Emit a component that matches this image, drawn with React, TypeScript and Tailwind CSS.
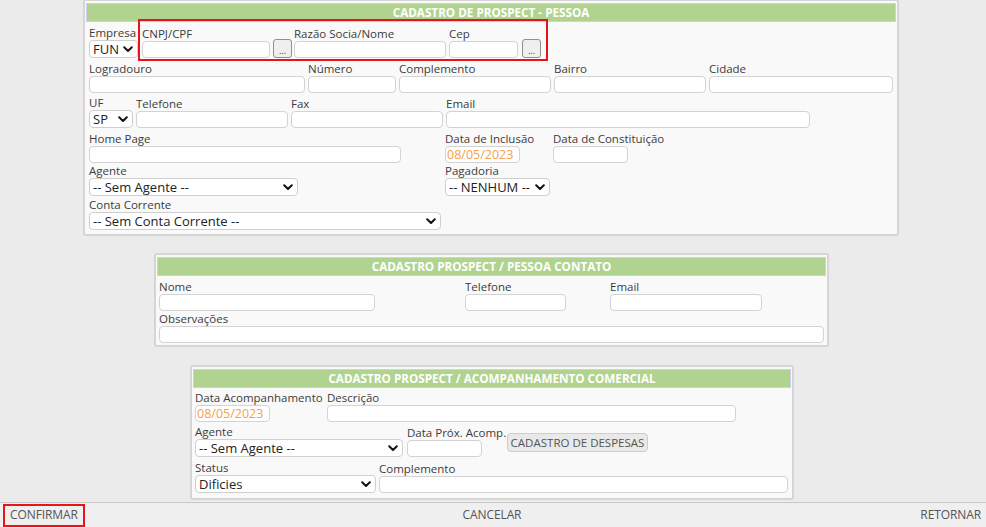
import React from "react";

const FONT = { fontFamily: '"Open Sans", "Noto Sans", sans-serif' };

function Label({ children }: { children: React.ReactNode }) {
  return (
    <div className="h-[14px] leading-[14px] text-[11.5px] text-[#3c3c3c] whitespace-nowrap">
      {children}
    </div>
  );
}

function Input({ className = "", value }: { className?: string; value?: string }) {
  return (
    <div
      className={
        "h-[17px] bg-white border border-[#d3d3d3] rounded-[4px] flex items-center px-[1px] text-[12.5px] leading-[15px] text-[#f5a04a] overflow-hidden " +
        className
      }
    >
      {value}
    </div>
  );
}

function Chevron() {
  return (
    <svg width="10" height="7" viewBox="0 0 10 7" className="shrink-0">
      <path d="M1.2 1.3 L5 5 L8.8 1.3" fill="none" stroke="#111" strokeWidth="2" strokeLinecap="round" strokeLinejoin="round" />
    </svg>
  );
}

function Select({ className = "", value }: { className?: string; value: string }) {
  return (
    <div
      className={
        "h-[18px] bg-white border border-[#cfcfcf] rounded-[4px] flex items-center justify-between pl-[3px] pr-[4px] text-[13px] leading-[16px] text-[#222] whitespace-nowrap overflow-hidden " +
        className
      }
    >
      <span>{value}</span>
      <Chevron />
    </div>
  );
}

function Field({ label, className = "", children }: { label: string; className?: string; children: React.ReactNode }) {
  return (
    <div className={"flex flex-col shrink-0 " + className}>
      <Label>{label}</Label>
      {children}
    </div>
  );
}

function DotsButton({ className = "" }: { className?: string }) {
  return (
    <div
      className={
        "w-[19px] h-[19px] shrink-0 bg-[#efefef] border border-[#8f8f8f] rounded-[3px] flex items-end justify-center pb-[2px] text-[9px] leading-[9px] text-[#333] " +
        className
      }
    >
      ...
    </div>
  );
}

function Header({ title }: { title: string }) {
  return (
    <div className="h-[19px] bg-[#b0d48f] border border-[#cdcdf7] flex items-center justify-center text-white font-bold text-[11.7px] whitespace-nowrap">
      {title}
    </div>
  );
}

export default function App() {
  return (
    <div className="w-[986px] h-[527px] overflow-hidden bg-[#ebebeb] flex flex-col" style={FONT}>
      {/* Panel 1 */}
      <div className="relative ml-[83px] w-[816px] mt-[-1px] bg-[#f9f9f9] border-2 border-[#d5d5d5] rounded-[3px] px-[1px] pt-[2px] pb-[4px]">
        <Header title="CADASTRO DE PROSPECT - PESSOA" />
        <div className="pl-[3px]">
          {/* Row 1 */}
          <div className="flex items-end mt-[4px]">
            <Field label="Empresa" className="w-[49px]">
              <Select value="FUN" className="w-[49px]" />
            </Field>
            <Field label="CNPJ/CPF" className="w-[128px] ml-[4px]">
              <Input className="w-[128px]" />
            </Field>
            <DotsButton className="ml-[3px]" />
            <Field label="Razão Socia/Nome" className="w-[152px] ml-[2px]">
              <Input className="w-[152px]" />
            </Field>
            <Field label="Cep" className="w-[69px] ml-[3px]">
              <Input className="w-[69px]" />
            </Field>
            <DotsButton className="ml-[4px]" />
          </div>
          {/* Row 2 */}
          <div className="flex items-end mt-[4px]">
            <Field label="Logradouro" className="w-[216px]">
              <Input className="w-[216px]" />
            </Field>
            <Field label="Número" className="w-[88px] ml-[3px]">
              <Input className="w-[88px]" />
            </Field>
            <Field label="Complemento" className="w-[152px] ml-[3px]">
              <Input className="w-[152px]" />
            </Field>
            <Field label="Bairro" className="w-[152px] ml-[3px]">
              <Input className="w-[152px]" />
            </Field>
            <Field label="Cidade" className="w-[184px] ml-[3px]">
              <Input className="w-[184px]" />
            </Field>
          </div>
          {/* Row 3 */}
          <div className="flex items-end mt-[3px]">
            <Field label="UF" className="w-[44px]">
              <Select value="SP" className="w-[44px]" />
            </Field>
            <Field label="Telefone" className="w-[152px] ml-[3px]">
              <Input className="w-[152px]" />
            </Field>
            <Field label="Fax" className="w-[152px] ml-[3px]">
              <Input className="w-[152px]" />
            </Field>
            <Field label="Email" className="w-[364px] ml-[3px]">
              <Input className="w-[364px]" />
            </Field>
          </div>
          {/* Row 4 */}
          <div className="flex items-end mt-[4px]">
            <Field label="Home Page" className="w-[312px]">
              <Input className="w-[312px]" />
            </Field>
            <Field label="Data de Inclusão" className="w-[75px] ml-[44px]">
              <Input className="w-[75px]" value="08/05/2023" />
            </Field>
            <Field label="Data de Constituição" className="w-[75px] ml-[33px]">
              <Input className="w-[75px]" />
            </Field>
          </div>
          {/* Row 5 */}
          <div className="flex items-end mt-[1px]">
            <Field label="Agente" className="w-[209px]">
              <Select value="-- Sem Agente --" className="w-[209px]" />
            </Field>
            <Field label="Pagadoria" className="w-[105px] ml-[147px]">
              <Select value="-- NENHUM --" className="w-[105px]" />
            </Field>
          </div>
          {/* Row 6 */}
          <div className="flex items-end mt-[2px]">
            <Field label="Conta Corrente" className="w-[352px]">
              <Select value="-- Sem Conta Corrente --" className="w-[352px]" />
            </Field>
          </div>
        </div>
        {/* highlight annotation */}
        <div className="absolute left-[53px] top-[18px] w-[410px] h-[42px] border-2 border-[#e8141c] pointer-events-none" />
      </div>

      {/* Panel 2 */}
      <div className="ml-[154px] w-[675px] mt-[17px] bg-[#f9f9f9] border-2 border-[#d5d5d5] rounded-[3px] px-[1px] pt-[2px] pb-[2px]">
        <Header title="CADASTRO PROSPECT / PESSOA CONTATO" />
        <div className="pl-[2px]">
          <div className="flex items-end mt-[4px]">
            <Field label="Nome" className="w-[216px]">
              <Input className="w-[216px]" />
            </Field>
            <Field label="Telefone" className="w-[101px] ml-[90px]">
              <Input className="w-[101px]" />
            </Field>
            <Field label="Email" className="w-[152px] ml-[44px]">
              <Input className="w-[152px]" />
            </Field>
          </div>
          <div className="flex items-end mt-[1px]">
            <Field label="Observações" className="w-[665px]">
              <Input className="w-[665px]" />
            </Field>
          </div>
        </div>
      </div>

      {/* Panel 3 */}
      <div className="ml-[190px] w-[604px] mt-[18px] bg-[#f9f9f9] border-2 border-[#d5d5d5] rounded-[3px] px-[1px] pt-[2px] pb-[5px]">
        <Header title="CADASTRO PROSPECT / ACOMPANHAMENTO COMERCIAL" />
        <div className="pl-[2px]">
          <div className="flex items-end mt-[3px]">
            <Field label="Data Acompanhamento" className="w-[75px]">
              <Input className="w-[75px]" value="08/05/2023" />
            </Field>
            <Field label="Descrição" className="w-[409px] ml-[57px]">
              <Input className="w-[409px]" />
            </Field>
          </div>
          <div className="flex items-end mt-[3px]">
            <Field label="Agente" className="w-[208px]">
              <Select value="-- Sem Agente --" className="w-[208px]" />
            </Field>
            <Field label="Data Próx. Acomp." className="w-[75px] ml-[4px]">
              <Input className="w-[75px]" />
            </Field>
            <div className="self-start mt-[8px] ml-[25px] w-[141px] h-[19px] bg-[#e9e9e9] border border-[#cdcdcd] rounded-[4px] flex items-center justify-center text-[11.5px] text-[#555] whitespace-nowrap">
              CADASTRO DE DESPESAS
            </div>
          </div>
          <div className="flex items-end mt-[4px]">
            <Field label="Status" className="w-[181px]">
              <Select value="Dificies" className="w-[181px]" />
            </Field>
            <Field label="Complemento" className="w-[409px] ml-[3px]">
              <Input className="w-[409px]" />
            </Field>
          </div>
        </div>
      </div>

      {/* Footer */}
      <div className="mt-[2px] h-[25px] shrink-0 border-t border-[#c9c9c9] bg-[#efefef] grid grid-cols-3 items-center pl-[3px] pr-[5px] text-[12px] text-[#555] tracking-[-0.1px]">
        <div className="justify-self-start h-[23px] px-[5px] border-2 border-[#e8141c] flex items-center">CONFIRMAR</div>
        <div className="justify-self-center">CANCELAR</div>
        <div className="justify-self-end">RETORNAR</div>
      </div>
    </div>
  );
}
